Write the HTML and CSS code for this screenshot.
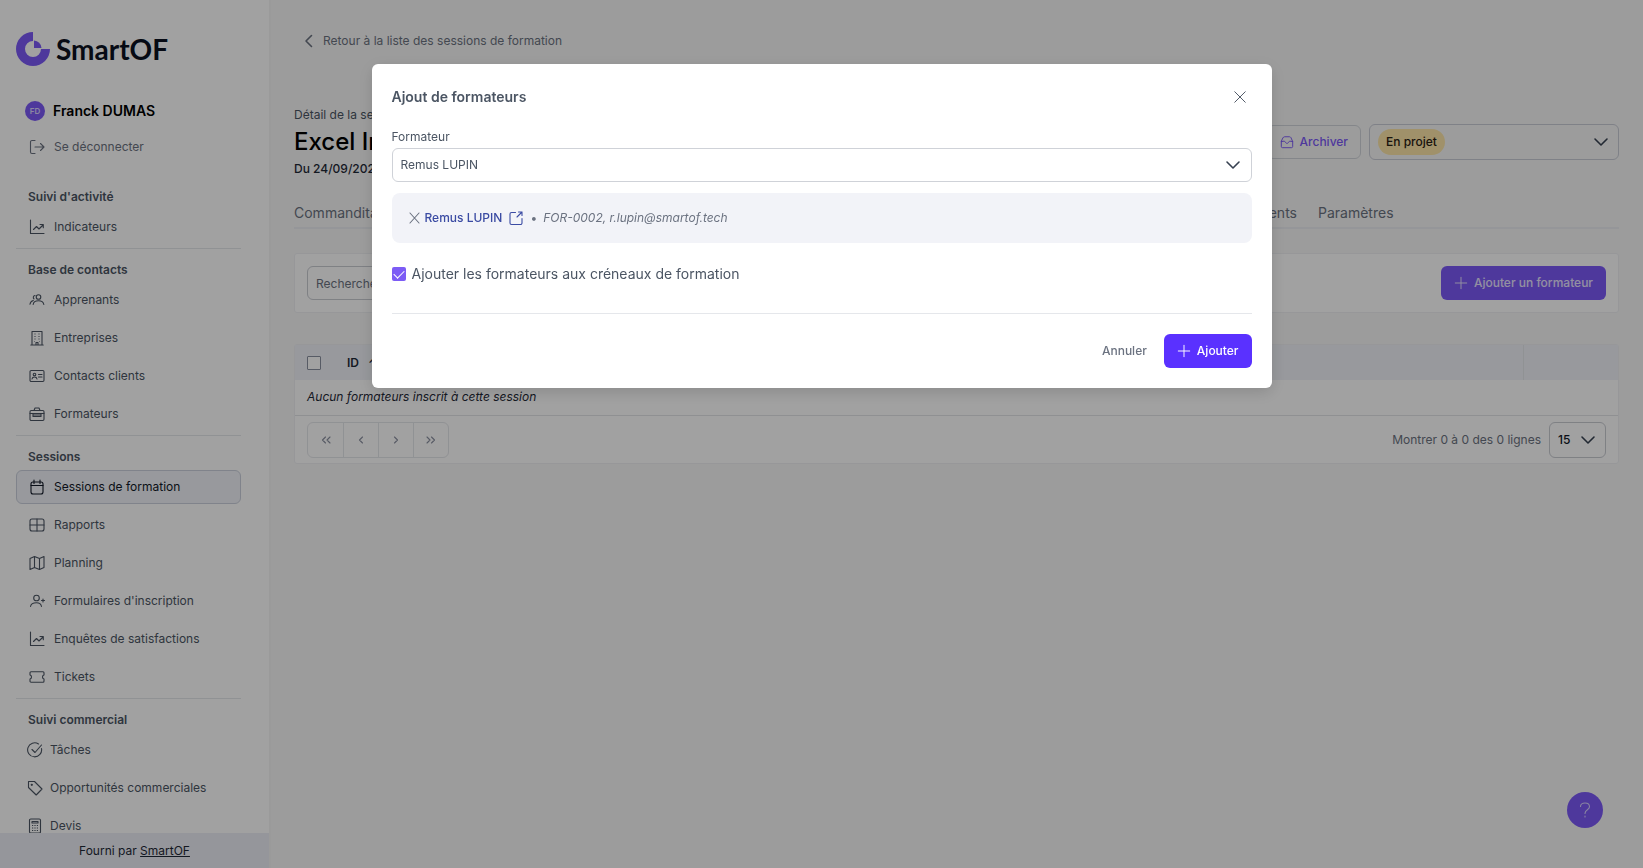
FILE: index.html
```html
<!DOCTYPE html>
<html lang="fr">
<head>
<meta charset="UTF-8" />
<meta name="viewport" content="width=device-width, initial-scale=1" />
<title>SmartOF - Session de formation</title>
<link rel="stylesheet" href="styles.css">
</head>
<body>
  <div class="app">
    <!-- Sidebar -->
    <aside class="sidebar">
      <a class="logo" href="#">
        <svg class="logo-mark" viewBox="0 0 34 34"><path d="M17 0A17 17 0 1 0 34 17H25A8 8 0 1 1 17 9Z"/><path d="M18 8.500A8 8 0 0 1 25.500 16H18Z"/></svg>
        <span>SmartOF</span>
      </a>

      <div class="user">
        <span class="avatar">FD</span>
        <span class="user-name">Franck DUMAS</span>
      </div>
      <a class="nav-item logout" href="#">
        <svg class="icon" viewBox="0 0 16 16"><path d="M6 1.500H3A1.500 1.500 0 0 0 1.500 3v10A1.500 1.500 0 0 0 3 14.500h3M6 8h9M11.500 4.500 15 8l-3.500 3.500"/></svg>
        Se déconnecter
      </a>

      <nav class="nav">
        <section class="nav-group">
          <h2>Suivi d'activité</h2>
          <a class="nav-item" href="#">
            <svg class="icon" viewBox="0 0 16 16"><path d="M1.500 1v13.500H15M4.500 10.500 7.500 7.500l2.500 2.500L14 6M11 5.500h3.300v3.300"/></svg>
            Indicateurs
          </a>
        </section>

        <section class="nav-group">
          <h2>Base de contacts</h2>
          <a class="nav-item" href="#">
            <svg class="icon" viewBox="0 0 16 16"><circle cx="9.500" cy="5" r="2.300"/><path d="M4.200 12.500c.3-2.500 2.500-3.700 5.300-3.700s4.800 1.200 5.300 3.700M6 3.500A2 2 0 0 0 5 7M4.300 8.500C2.500 9 1.300 10 1 12.300"/></svg>
            Apprenants
          </a>
          <a class="nav-item" href="#">
            <svg class="icon" viewBox="0 0 16 16"><path d="M3 15V1.500h10V15M1.800 15h12.400M7 15v-2.500h2V15"/><path class="dots" d="M5.500 4h1M9.500 4h1M5.500 6.500h1M9.500 6.500h1M5.500 9h1M9.500 9h1M5.500 11.500h.5M10 11.500h.5"/></svg>
            Entreprises
          </a>
          <a class="nav-item" href="#">
            <svg class="icon" viewBox="0 0 16 16"><rect x="1" y="2.500" width="14" height="11" rx="1.200"/><circle cx="5.500" cy="6.500" r="1.300"/><path d="M3 11c.2-1.500 1.200-2 2.500-2s2.300.5 2.500 2M9.500 6.500H13M9.500 9H13"/></svg>
            Contacts clients
          </a>
          <a class="nav-item" href="#">
            <svg class="icon" viewBox="0 0 16 16"><rect x="1" y="4.500" width="14" height="10" rx="1.200"/><path d="M5 4.500 6 2h4l1 2.500M1 7.500h14M4 7.500v3h8v-3M4 9h8"/></svg>
            Formateurs
          </a>
        </section>

        <section class="nav-group">
          <h2>Sessions</h2>
          <a class="nav-item active" href="#" aria-current="page">
            <svg class="icon" viewBox="0 0 16 16"><rect x="2" y="3" width="12" height="12" rx="2"/><path d="M5 1v3.500M11 1v3.500M2 6.500h12"/></svg>
            Sessions de formation
          </a>
          <a class="nav-item" href="#">
            <svg class="icon" viewBox="0 0 16 16"><rect x="1" y="2" width="14" height="12" rx="2"/><path d="M8 2v12M1 8h14"/></svg>
            Rapports
          </a>
          <a class="nav-item" href="#">
            <svg class="icon" viewBox="0 0 16 16"><path d="m1 3.500 4.500-2 5 2 4.500-2v11l-4.500 2-5-2-4.500 2ZM5.500 1.500v11M10.500 3.500v11"/></svg>
            Planning
          </a>
          <a class="nav-item" href="#">
            <svg class="icon" viewBox="0 0 16 16"><circle cx="7.500" cy="5" r="2.800"/><path d="M1.500 13.500C2 11 4 9.800 7.500 9.800s4.500 1.200 5 3.700M14 6v3M12.500 7.500h3"/></svg>
            Formulaires d'inscription
          </a>
          <a class="nav-item" href="#">
            <svg class="icon" viewBox="0 0 16 16"><path d="M1.500 1v13.500H15M4.500 10.500 7.500 7.500l2.500 2.500L14 6M11 5.500h3.300v3.300"/></svg>
            Enquêtes de satisfactions
          </a>
          <a class="nav-item" href="#">
            <svg class="icon" viewBox="0 0 16 16"><path d="M2 2.800h12a1 1 0 0 1 1 1V6c-2 .5-2 3.500 0 4v2.200a1 1 0 0 1-1 1H2a1 1 0 0 1-1-1V10c2-.5 2-3.500 0-4V3.800a1 1 0 0 1 1-1Z"/></svg>
            Tickets
          </a>
        </section>

        <section class="nav-group commercial">
          <h2>Suivi commercial</h2>
          <a class="nav-item" href="#">
            <svg class="icon" viewBox="0 0 16 16"><path d="M14.500 6.500A7 7 0 1 1 11.500 2M5 7.500 8 10.500 14.500 3"/></svg>
            Tâches
          </a>
          <a class="nav-item" href="#">
            <svg class="icon" viewBox="0 0 16 16"><path d="M1.500 1.500h6l7.500 7.500-5.800 6L1.500 7.500Z"/><circle cx="4.800" cy="4.800" r=".6"/></svg>
            Opportunités commerciales
          </a>
          <a class="nav-item" href="#">
            <svg class="icon" viewBox="0 0 16 16"><rect x="2.500" y="1" width="11" height="14" rx="1.200"/><path d="M5 3.500h6v1.500H5Z"/><path class="dots" d="M5 7.500h1.200M7.400 7.500h1.200M9.800 7.500H11M5 10h1.200M7.400 10h1.200M9.800 10H11M5 12.500h1.200M7.400 12.500h1.200M9.800 12.500H11"/></svg>
            Devis
          </a>
        </section>
      </nav>

      <footer class="sidebar-footer">Fourni par <a href="#">SmartOF</a></footer>
    </aside>

    <!-- Page content -->
    <main class="main">
      <a class="back" href="#">
        <svg class="icon" viewBox="0 0 16 16"><path d="M10.500 2.500 5 8l5.500 5.500"/></svg>
        Retour à la liste des sessions de formation
      </a>

      <header class="page-header">
        <div>
          <p class="overline">Détail de la session</p>
          <h1>Excel Initiation</h1>
          <p class="dates">Du 24/09/2024 au 26/09/2024</p>
        </div>
        <div class="actions">
          <button class="btn outline">
            <svg class="icon" viewBox="0 0 16 16"><path d="M1.500 7.500V13a1.500 1.500 0 0 0 1.500 1.500h10a1.500 1.500 0 0 0 1.500-1.500V7.500l-2-4.500a2 2 0 0 0-1.800-1H5.300a2 2 0 0 0-1.800 1ZM1.500 7.500 5 7l3 3 3-3 3.500.5"/></svg>
            Archiver
          </button>
          <div class="status">
            <select class="pill" aria-label="Statut"><option>En projet</option></select>
            <svg class="chevron" viewBox="0 0 16 16"><path d="m2 5 6 6 6-6"/></svg>
          </div>
        </div>
      </header>

      <nav class="tabs">
        <a href="#">Commanditaires</a>
        <a href="#">Apprenants</a>
        <a href="#">Formateurs</a>
        <a href="#">Créneaux</a>
        <a href="#">Émargements</a>
        <a href="#">Questionnaires</a>
        <a href="#">Satisfaction</a>
        <a href="#">Financements</a>
        <a href="#">Extranet</a>
        <a href="#">Documents</a>
        <a href="#">Paramètres</a>
      </nav>

      <div class="card toolbar">
        <input class="search" type="text" placeholder="Rechercher" aria-label="Rechercher">
        <button class="btn primary soft">
          <svg class="icon" viewBox="0 0 16 16"><path d="M8 1.500v13M1.500 8h13"/></svg>
          Ajouter un formateur
        </button>
      </div>

      <div class="card table-card">
        <table>
          <thead>
            <tr>
              <th class="col-check"><input type="checkbox" aria-label="Tout sélectionner"></th>
              <th>ID <span class="sort">↑</span></th>
              <th class="col-actions"></th>
            </tr>
          </thead>
          <tbody>
            <tr><td colspan="3">Aucun formateurs inscrit à cette session</td></tr>
          </tbody>
        </table>
        <div class="paginator">
          <div class="pages">
            <button aria-label="Première page"><svg viewBox="0 0 16 16"><path d="m7.500 5-3 3 3 3M12 5 9 8l3 3"/></svg></button>
            <button aria-label="Page précédente"><svg viewBox="0 0 16 16"><path d="M9.500 5 6.500 8l3 3"/></svg></button>
            <button aria-label="Page suivante"><svg viewBox="0 0 16 16"><path d="m6.500 5 3 3-3 3"/></svg></button>
            <button aria-label="Dernière page"><svg viewBox="0 0 16 16"><path d="m4 5 3 3-3 3M8.500 5l3 3-3 3"/></svg></button>
          </div>
          <span class="count">Montrer 0 à 0 des 0 lignes</span>
          <div class="page-size">
            <select aria-label="Lignes par page"><option>15</option></select>
            <svg class="chevron" viewBox="0 0 16 16"><path d="m2 5 6 6 6-6"/></svg>
          </div>
        </div>
      </div>
    </main>
  </div>

  <button class="help" aria-label="Aide">
    <svg viewBox="0 0 16 16"><path d="M3.500 4.500C3.500 2.500 5.500 1 8 1s4.500 1.500 4.500 3.700C12.500 8 8 7.500 8 11.500M8 14v1"/></svg>
  </button>

  <!-- Modal -->
  <div class="overlay">
    <div class="modal" role="dialog" aria-modal="true" aria-labelledby="modal-title">
      <div class="modal-head">
        <h2 id="modal-title">Ajout de formateurs</h2>
        <button class="close" aria-label="Fermer"><svg viewBox="0 0 16 16"><path d="m2 2 12 12M14 2 2 14"/></svg></button>
      </div>

      <label class="field-label" for="trainer">Formateur</label>
      <div class="select-box">
        <select id="trainer"><option>Remus LUPIN</option></select>
        <svg class="chevron" viewBox="0 0 16 16"><path d="m2 5 6 6 6-6"/></svg>
      </div>

      <div class="selected">
        <button class="remove" aria-label="Retirer"><svg viewBox="0 0 16 16"><path d="m3 3 9 10M12 3 3 13"/></svg></button>
        <a class="trainer" href="#">Remus LUPIN
          <svg viewBox="0 0 16 16"><path d="M7.500 2.500H3.500A1.500 1.500 0 0 0 2 4v9a1.500 1.500 0 0 0 1.500 1.500h9A1.500 1.500 0 0 0 14 13V8.500M10.500 2H14v3.500M14 2 9 7"/></svg>
        </a>
        <span class="bullet">•</span>
        <em>FOR-0002, r.lupin@smartof.tech</em>
      </div>

      <div class="check-row">
        <input type="checkbox" id="slots" checked>
        <label for="slots">Ajouter les formateurs aux créneaux de formation</label>
      </div>

      <div class="modal-foot">
        <button class="btn text">Annuler</button>
        <button class="btn primary">
          <svg class="icon" viewBox="0 0 16 16"><path d="M8 1.500v13M1.500 8h13"/></svg>
          Ajouter
        </button>
      </div>
    </div>
  </div>
</body>
</html>
```
FILE: styles.css
```css
* {
  box-sizing: border-box;
}

body {
  margin: 0;
  font-family: Inter, "Liberation Sans", sans-serif;
  font-size: 12px;
  line-height: 16px;
  color: #4b5563;
  background: #f8f8f8;
}

a {
  color: inherit;
  text-decoration: none;
}

h1, h2, p {
  margin: 0;
}

button, input, select {
  font: inherit;
  color: inherit;
}

button {
  padding: 0;
  border: none;
  background: none;
  cursor: pointer;
}

select {
  appearance: none;
  border: none;
  background: none;
  outline: none;
}

svg {
  fill: none;
  stroke: currentColor;
  stroke-width: 1.1;
  stroke-linecap: round;
  stroke-linejoin: round;
  flex: none;
}

.icon {
  width: 16px;
  height: 16px;
}

.dots {
  stroke-linecap: butt;
}

.chevron {
  width: 16px;
  height: 16px;
  stroke: #374151;
  stroke-width: 1.6;
  pointer-events: none;
}

.app {
  display: flex;
  height: 100vh;
}

/* Sidebar */
.sidebar {
  display: flex;
  flex-direction: column;
  width: 271px;
  flex: none;
  background: #fff;
  border-right: 2px solid #f4f4f4;
}

.logo {
  display: flex;
  align-items: center;
  gap: 6px;
  padding: 32px 16px 0;
  font-family: Lato, Inter, sans-serif;
  font-size: 28px;
  font-weight: 700;
  line-height: 34px;
  color: #0b1020;
}

.logo-mark {
  width: 34px;
  height: 34px;
  fill: #7c5af8;
  stroke: none;
}

.user {
  display: flex;
  align-items: center;
  gap: 8px;
  padding: 35px 25px 9px;
}

.avatar {
  width: 20px;
  border-radius: 50%;
  background: #7c5af8;
  color: #ddd6fe;
  font-size: 8px;
  font-weight: 600;
  line-height: 20px;
  text-align: center;
}

.user-name {
  font-size: 14px;
  font-weight: 600;
  line-height: 20px;
  color: #000;
}

.nav {
  flex: 1;
  min-height: 0;
  overflow: hidden;
  padding-top: 8px;
}

.nav-group {
  margin: 0 28px 0 16px;
}

.nav-group + .nav-group {
  border-top: 1px solid #e5e7eb;
}

.nav-group h2 {
  padding: 13px 12px 5px;
  font-size: 12px;
  font-weight: 600;
  line-height: 16px;
}

.nav-item {
  display: flex;
  align-items: center;
  gap: 9px;
  height: 34px;
  margin-bottom: 4px;
  padding: 0 12px;
  border: 1px solid transparent;
  border-radius: 6px;
}

.nav-item.active {
  background: #f1f3f9;
  border-color: #cbd0dc;
  color: #111827;
}

.commercial .nav-item {
  gap: 7px;
  padding: 0 10px;
}

.logout {
  margin: 0 28px 4px 16px;
  color: #6b7280;
}

.sidebar-footer {
  padding: 10px 0 9px;
  background: #eceef5;
  color: #1f2937;
  text-align: center;
}

.sidebar-footer a {
  text-decoration: underline;
}

/* Page content */
.main {
  flex: 1;
  min-width: 0;
  padding: 33px 24px 24px 23px;
}

.back {
  display: flex;
  align-items: center;
  gap: 6px;
  padding-left: 7px;
  color: #6b7280;
}

.back .icon {
  stroke-width: 1.6;
}

.page-header {
  display: flex;
  justify-content: space-between;
  margin-top: 58px;
}

.overline {
  color: #4b5563;
}

.page-header h1 {
  font-size: 24px;
  font-weight: 500;
  line-height: 38px;
  color: #000;
}

.dates {
  font-weight: 500;
  color: #1f2937;
}

.actions {
  display: flex;
  align-items: center;
  gap: 8px;
}

.btn {
  display: inline-flex;
  align-items: center;
  gap: 6px;
  height: 34px;
  padding: 0 12px;
  border: 1px solid transparent;
  border-radius: 6px;
  font-weight: 500;
}

.btn .icon {
  width: 14px;
  height: 14px;
}

.btn.primary {
  background: #5a31ff;
  color: #fff;
}

.btn.soft {
  background: #7c5af8;
  color: #e9e4ff;
}

.btn.outline {
  border-color: #d1d5db;
  color: #7c5af8;
}

.btn.text {
  color: #6b7280;
}

.status {
  display: flex;
  align-items: center;
  justify-content: space-between;
  width: 250px;
  height: 36px;
  padding: 0 9px 0 8px;
  border: 1px solid #c9ccd6;
  border-radius: 6px;
}

.pill {
  padding: 5px 8px;
  border-radius: 13px;
  background: #fde6a8;
  color: #292013;
  font-weight: 500;
}

.tabs {
  display: flex;
  gap: 21px;
  margin-top: 26px;
  padding-bottom: 4px;
  border-bottom: 2px solid #eceef2;
  font-size: 14px;
  line-height: 20px;
  color: #6b7280;
}

.card {
  background: #fff;
  border: 1px solid #eff0f3;
  border-radius: 3px;
}

.toolbar {
  display: flex;
  justify-content: space-between;
  margin-top: 24px;
  padding: 12px;
}

.search {
  width: 260px;
  height: 34px;
  padding: 0 8px;
  border: 1px solid #c9ccd2;
  border-radius: 6px;
  background: #fff;
}

.search::placeholder {
  color: #6b7280;
}

.table-card {
  margin-top: 31px;
}

table {
  width: 100%;
  border-collapse: collapse;
}

th {
  height: 35px;
  padding: 0 12px;
  background: #f1f3f9;
  color: #1f2937;
  font-weight: 600;
  text-align: left;
}

.col-check {
  width: 40px;
}

.col-actions {
  width: 95px;
  border-left: 1px solid #e5e7eb;
}

.sort {
  margin-left: 6px;
}

td {
  height: 35px;
  padding: 0 12px;
  border-bottom: 1px solid #e2e4e8;
  color: #1f2937;
  font-style: italic;
}

input[type="checkbox"] {
  appearance: none;
  display: block;
  width: 14px;
  height: 14px;
  margin: 0;
  border: 1px solid #8b90a0;
  border-radius: 1px;
  background: #fff;
}

.paginator {
  display: flex;
  align-items: center;
  gap: 8px;
  padding: 6px 12px 5px;
}

.pages {
  display: flex;
  border: 1px solid #e5e7eb;
  border-radius: 6px;
}

.pages button {
  width: 35px;
  height: 34px;
  color: #8b90a0;
}

.pages button + button {
  border-left: 1px solid #e5e7eb;
}

.pages svg {
  display: block;
  width: 16px;
  height: 16px;
  margin: 0 auto;
}

.count {
  margin-left: auto;
  color: #6b7280;
}

.page-size {
  display: flex;
  align-items: center;
  justify-content: space-between;
  width: 57px;
  height: 36px;
  padding: 0 9px 0 8px;
  border: 1px solid #c9ccd2;
  border-radius: 6px;
  color: #111827;
  font-weight: 500;
}

.page-size select {
  width: 22px;
  padding: 0;
}

.help {
  position: fixed;
  right: 40px;
  bottom: 40px;
  width: 36px;
  height: 36px;
  border-radius: 50%;
  background: #7c5af8;
  color: #d9d0ff;
}

.help svg {
  display: block;
  width: 16px;
  height: 16px;
  margin: 0 auto;
}

/* Modal */
.overlay {
  position: fixed;
  inset: 0;
  display: flex;
  align-items: flex-start;
  justify-content: center;
  padding-top: 64px;
  background: rgba(0, 0, 0, 0.37);
}

.modal {
  width: 900px;
  max-width: 95%;
  padding: 20px;
  border-radius: 6px;
  background: #fff;
  box-shadow: 0 4px 16px rgba(0, 0, 0, 0.15);
}

.modal-head {
  display: flex;
  align-items: center;
  justify-content: space-between;
  padding-right: 5px;
}

.modal-head h2 {
  font-size: 14px;
  font-weight: 600;
  line-height: 26px;
}

.close svg {
  display: block;
  width: 14px;
  height: 14px;
}

.field-label {
  display: block;
  margin: 19px 0 3px;
}

.select-box {
  display: flex;
  align-items: center;
  height: 34px;
  padding-right: 10px;
  border: 1px solid #cfd2d8;
  border-radius: 6px;
}

.select-box select {
  flex: 1;
  padding: 0 8px;
}

.selected {
  display: flex;
  align-items: center;
  height: 50px;
  margin-top: 11px;
  padding: 0 15px;
  border-radius: 8px;
  background: #f2f3f8;
  color: #6b7280;
}

.selected svg {
  display: block;
  width: 16px;
  height: 16px;
}

.trainer {
  display: flex;
  align-items: center;
  gap: 6px;
  margin-left: 2px;
  color: #3b4ba3;
  font-weight: 500;
}

.bullet {
  margin: 0 6px;
}

.check-row {
  display: flex;
  align-items: center;
  gap: 6px;
  margin: 20px 0 28px;
  font-size: 14px;
  line-height: 22px;
}

.check-row input[type="checkbox"] {
  border: none;
  border-radius: 2px;
  background: #7c5cf5;
}

/* White tick */
.check-row input:checked::before {
  content: "";
  display: block;
  width: 9px;
  height: 5px;
  margin: 3px auto 0;
  border: solid #fff;
  border-width: 0 0 1px 1px;
  transform: rotate(-45deg);
}

.modal-foot {
  display: flex;
  justify-content: flex-end;
  gap: 4px;
  padding-top: 20px;
  border-top: 1px solid #e5e7eb;
}
```
